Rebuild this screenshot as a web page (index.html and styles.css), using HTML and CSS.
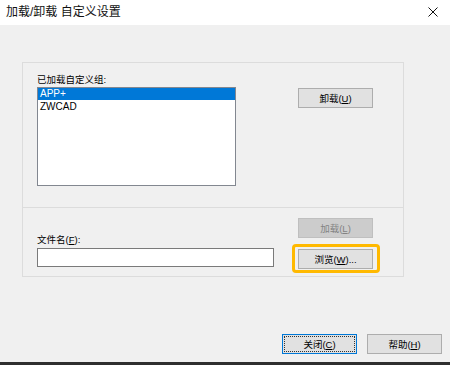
FILE: index.html
```html
<!DOCTYPE html>
<html lang="zh-CN">
<head>
<meta charset="utf-8">
<title>加载/卸载 自定义设置</title>
<link rel="stylesheet" href="styles.css">
</head>
<body>
<div class="window">
  <div class="titlebar">
    <span class="title">加载/卸载 自定义设置</span>
    <svg class="close" width="10" height="10" viewBox="0 0 10 10"><path d="M0.5 0.5 L9.5 9.5 M9.5 0.5 L0.5 9.5" stroke="#111" stroke-width="1" fill="none"/></svg>
  </div>
  <div class="content">
    <div class="panel">
      <div class="upper">
        <div class="leftcol">
          <div class="label">已加载自定义组:</div>
          <div class="listbox">
            <div class="item selected">APP+</div>
            <div class="item">ZWCAD</div>
          </div>
        </div>
        <div class="rightcol">
          <button class="btn">卸载(<u>U</u>)</button>
        </div>
      </div>
      <div class="lower">
        <div class="leftcol2">
          <div class="label">文件名(<u>F</u>):</div>
          <div class="input"></div>
        </div>
        <div class="rightcol2">
          <button class="btn disabled">加载(<u>L</u>)</button>
          <button class="btn ring">浏览(<u>W</u>)...</button>
        </div>
      </div>
    </div>
  </div>
  <div class="footer">
    <button class="btn default">关闭(<u>C</u>)</button>
    <button class="btn">帮助(<u>H</u>)</button>
  </div>
  <div class="taskstrip"></div>
</div>
</body>
</html>
```
FILE: styles.css
```css
* { box-sizing: border-box; }
html, body { margin: 0; padding: 0; }
body {
  width: 450px;
  height: 365px;
  overflow: hidden;
  background: #f0f0f0;
  font-family: "Liberation Sans", "Noto Sans CJK SC", sans-serif;
  color: #000;
}
.window {
  display: flex;
  flex-direction: column;
  height: 365px;
}
.titlebar {
  height: 25px;
  background: #fff;
  display: flex;
  align-items: center;
  justify-content: space-between;
  padding: 0 12px 0 6px;
}
.title {
  font-size: 12px;
  line-height: 25px;
  color: #111;
}
.close { display: block; margin-top: -1px; }
.content {
  flex: 1;
  padding: 37px 0 0 22px;
}
.panel {
  width: 382px;
  height: 215px;
  border: 1px solid #dcdcdc;
  display: flex;
  flex-direction: column;
}
.upper {
  height: 145px;
  display: flex;
  padding: 11px 0 0 14px;
  border-bottom: 1px solid #dcdcdc;
}
.label {
  font-size: 9.5px;
  line-height: 12px;
  height: 12px;
  margin-bottom: 1px;
  white-space: nowrap;
}
.label u, .btn u { text-decoration: underline; }
.listbox {
  width: 199px;
  height: 99px;
  border: 1px solid #828790;
  background: #fff;
}
.item {
  font-size: 10px;
  line-height: 12px;
  height: 12px;
  padding-left: 2px;
  margin-bottom: 1px;
}
.item.selected {
  background: #0078d7;
  color: #fff;
}
.rightcol {
  padding: 14px 0 0 62px;
}
.btn {
  position: relative;
  width: 75px;
  height: 20px;
  padding: 0;
  margin: 0;
  background: #e1e1e1;
  border: 1px solid #adadad;
  font-family: "Liberation Sans", "Noto Sans CJK SC", sans-serif;
  font-size: 9.5px;
  line-height: 17px;
  color: #000;
  text-align: center;
  display: block;
}
.btn.disabled {
  background: #cccccc;
  border-color: #bfbfbf;
  color: #838383;
}
.btn.ring::after {
  content: "";
  position: absolute;
  left: -7px;
  top: -6px;
  right: -8px;
  bottom: -5px;
  border: 3px solid #ffb900;
  border-radius: 4px;
}
.btn.default {
  border-color: #0078d7;
}
.btn.default::before {
  content: "";
  position: absolute;
  inset: 1px;
  border: 1px dotted #333;
}
.lower {
  flex: 1;
  display: flex;
  align-items: flex-end;
  padding: 9px 0 7px 14px;
}
.leftcol2 {
  width: 261px;
  padding-bottom: 2px;
}
.leftcol2 .label { margin-bottom: 2px; }
.input {
  width: 237px;
  height: 19px;
  background: #fff;
  border: 1px solid #7a7a7a;
}
.rightcol2 {
  display: flex;
  flex-direction: column;
  gap: 11px;
}
.footer {
  display: flex;
  justify-content: flex-end;
  gap: 10px;
  padding: 0 8px 0 0;
  margin-bottom: 8px;
}
.taskstrip {
  height: 3px;
  background: #2e2e2e;
}
```
